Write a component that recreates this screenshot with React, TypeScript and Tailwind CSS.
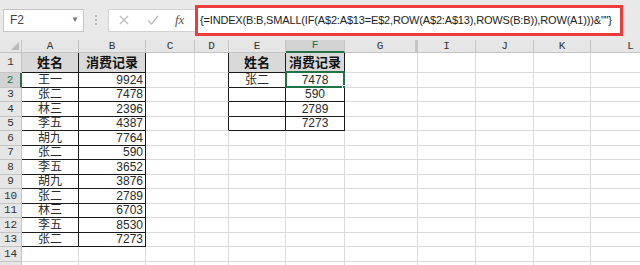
import { useState } from "react";

const cols = ["A", "B", "C", "D", "E", "F", "G", "I", "J", "K", "L"];

const data: Record<string, string> = {
  A1: "姓名",
  B1: "消费记录",
  E1: "姓名",
  F1: "消费记录",
  E2: "张二",
  F2: "7478",
  F3: "590",
  F4: "2789",
  F5: "7273",
};

const names = ["王一", "张二", "林三", "李五", "胡九", "张二", "李五", "胡九", "张二", "林三", "李五", "张二"];
const amounts = ["9924", "7478", "2396", "4387", "7764", "590", "3652", "3876", "2789", "6703", "8530", "7273"];
names.forEach((n, i) => {
  data["A" + (i + 2)] = n;
  data["B" + (i + 2)] = amounts[i];
});

const rows = Array.from({ length: 15 }, (_, i) => i + 1);

function inTable(r: number, c: string) {
  if (r >= 1 && r <= 13 && (c === "A" || c === "B")) return true;
  if (r >= 1 && r <= 5 && (c === "E" || c === "F")) return true;
  return false;
}

function Cell({ r, c }: { r: number; c: string }) {
  const i = cols.indexOf(c);
  const next = cols[i + 1];
  const blackRight = inTable(r, c) || (next ? inTable(r, next) : false);
  const blackBottom = inTable(r, c) || inTable(r + 1, c);
  const head = r === 1 && inTable(r, c);
  const value = data[c + r];
  const isNum = value !== undefined && /^\d+$/.test(value);
  let align = "justify-center";
  if (isNum && c === "B") align = "justify-end pr-[2px]";

  return (
    <div
      className={[
        "relative flex items-center border-r border-b",
        blackRight ? "border-r-[#1a1a1a]" : "border-r-[#dadada]",
        blackBottom ? "border-b-[#1a1a1a]" : "border-b-[#dadada]",
        head ? "bg-[#d9d9d9] text-[13px] font-bold text-[#111]" : "bg-white text-[12px] text-[#2a2a2a]",
        align,
      ].join(" ")}
    >
      <span className="leading-none">{value}</span>
      {c === "F" && r === 2 ? (
        <>
          <div className="absolute -left-px -top-[2px] right-[-1px] bottom-[-1px] border-2 border-[#217346]" />
          <div className="absolute right-[-4px] bottom-[-4px] w-[6px] h-[6px] bg-[#217346] border border-white" />
        </>
      ) : null}
    </div>
  );
}

export default function App() {
  const [formula] = useState('{=INDEX(B:B,SMALL(IF(A$2:A$13=E$2,ROW(A$2:A$13),ROWS(B:B)),ROW(A1)))&""}');

  return (
    <div className="w-[640px] h-[265px] overflow-hidden bg-white font-['Liberation_Sans','Noto_Sans_CJK_SC',sans-serif]">
      {/* formula bar */}
      <div className="h-[40px] bg-[#e9e9e9] flex items-center relative">
        <div className="ml-[3px] w-[81px] h-[23px] bg-white border border-[#c6c6c6] flex items-center justify-between pl-[6px] pr-[4px]">
          <span className="text-[12px] text-[#444]">F2</span>
          <span className="text-[8px] text-[#777]">▼</span>
        </div>
        <div className="ml-[11px] flex flex-col gap-[2px]">
          <div className="w-[2px] h-[2px] bg-[#b5b5b5]" />
          <div className="w-[2px] h-[2px] bg-[#b5b5b5]" />
          <div className="w-[2px] h-[2px] bg-[#b5b5b5]" />
        </div>
        <div className="ml-[11px] w-[88px] h-[23px] bg-white border border-[#d2d2d2] flex items-center">
          <svg width="12" height="12" viewBox="0 0 12 12" className="ml-[9px]">
            <path d="M2 2 L10 10 M10 2 L2 10" stroke="#bdbdbd" strokeWidth="1.3" fill="none" />
          </svg>
          <svg width="14" height="12" viewBox="0 0 14 12" className="ml-[16px]">
            <path d="M2 6.5 L5.5 10 L12 2" stroke="#bdbdbd" strokeWidth="1.3" fill="none" />
          </svg>
          <span className="ml-[15px] text-[13px] italic text-[#555] font-['Liberation_Serif',serif]">fx</span>
        </div>
        <div className="absolute left-[195px] top-[5px] w-[428px] h-[31px] border-[3px] border-[#ee3b3b] bg-white flex items-center pl-[2px]">
          <span className="text-[11px] text-[#222] whitespace-nowrap tracking-[-0.17px]">{formula}</span>
        </div>
      </div>

      {/* sheet */}
      <div className="grid grid-cols-[22px_57px_67px_49px_34px_57px_59px_73px_58px_58px_57px_80px] grid-rows-[13px_20px_repeat(13,14.5px)_14.5px]">
        <div className="relative bg-[#e6e6e6] border-r border-b border-[#c4c4c4]">
          <div className="absolute right-[2px] bottom-[2px] w-0 h-0 border-l-[8px] border-l-transparent border-b-[8px] border-b-[#b9b9b9]" />
        </div>
        {cols.map((c) => (
          <div
            key={c}
            className={
              c === "F"
                ? "flex items-center justify-center bg-[#d2d2d2] border-r border-r-[#c4c4c4] border-b-2 border-b-[#217346] text-[#217346] text-[11px] font-['Liberation_Mono',monospace]"
                : c === "G"
                  ? "flex items-center justify-center bg-[#e6e6e6] border-r-[3px] border-r-[#c4c4c4] border-b border-b-[#c4c4c4] text-[#333] text-[11px] font-['Liberation_Mono',monospace]"
                  : "flex items-center justify-center bg-[#e6e6e6] border-r border-b border-[#c4c4c4] text-[#333] text-[11px] font-['Liberation_Mono',monospace]"
            }
          >
            {c}
          </div>
        ))}
        {rows.map((r) => (
          <>
            <div
              key={"h" + r}
              className={
                r === 2
                  ? "flex items-center justify-center bg-[#d2d2d2] border-r-2 border-r-[#217346] border-b border-b-[#c4c4c4] text-[#217346] text-[11px] font-['Liberation_Mono',monospace]"
                  : "flex items-center justify-center bg-[#e6e6e6] border-r border-b border-[#c4c4c4] text-[#333] text-[11px] font-['Liberation_Mono',monospace]"
              }
            >
              {r < 15 ? r : ""}
            </div>
            {cols.map((c) => (
              <Cell key={c + r} r={r} c={c} />
            ))}
          </>
        ))}
      </div>
    </div>
  );
}
